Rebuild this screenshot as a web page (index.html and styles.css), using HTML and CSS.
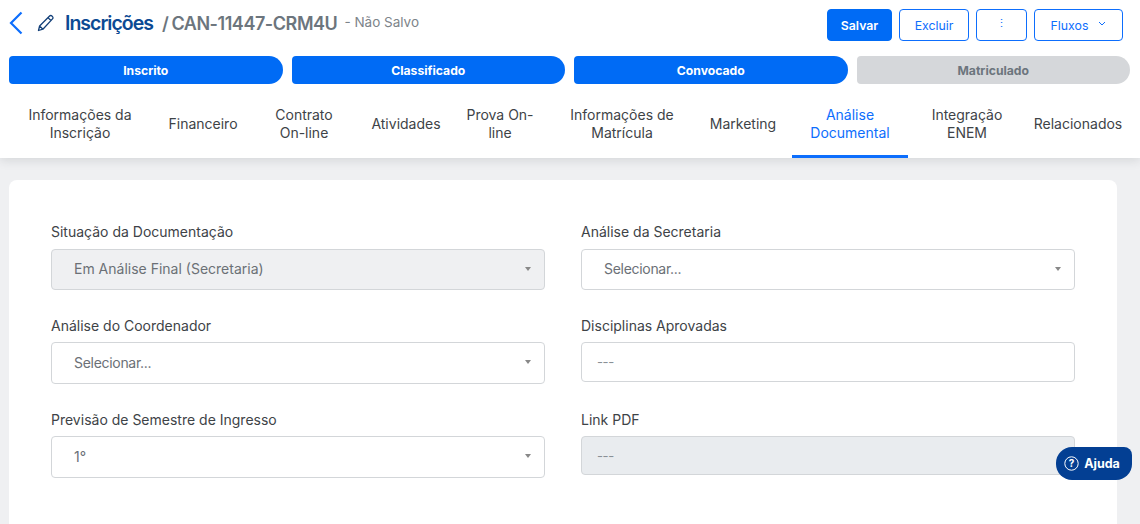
FILE: index.html
```html
<!DOCTYPE html>
<html lang="pt-BR">
<head>
<meta charset="utf-8">
<title>Inscrições</title>
<link rel="stylesheet" href="styles.css">
</head>
<body>
<header class="head">
  <div class="top">
    <div class="crumbs">
      <svg class="back" width="16" height="24" viewBox="0 0 16 24"><path d="M12.5 1.5 2 12 12.5 22.5" fill="none" stroke="#0d6efd" stroke-width="2.2"/></svg>
      <svg class="pen" width="18" height="18" viewBox="0 0 18 18"><path d="M1.5 16.5 2.6 12 12.6 2a1.6 1.6 0 0 1 2.3 0l.6.6a1.6 1.6 0 0 1 0 2.3L5.9 15.2ZM11 3.6l3.4 3.4M2.6 12l3.3 3.2" fill="none" stroke="#123f78" stroke-width="1.3" stroke-linejoin="round"/></svg>
      <h1 class="title">Inscrições</h1>
      <span class="code">/ CAN-11447-CRM4U</span>
      <span class="status">- Não Salvo</span>
    </div>
    <div class="actions">
      <button class="btn solid save">Salvar</button>
      <button class="btn del">Excluir</button>
      <button class="btn more">⋮</button>
      <button class="btn flows">Fluxos <svg class="chev" width="8" height="5" viewBox="0 0 8 5"><path d="M1 1l3 3 3-3" fill="none" stroke="#0d6efd" stroke-width="1"/></svg></button>
    </div>
  </div>
  <div class="steps">
    <div class="step on">Inscrito</div>
    <div class="step on">Classificado</div>
    <div class="step on">Convocado</div>
    <div class="step">Matriculado</div>
  </div>
  <nav class="tabs">
    <a class="tab">Informações da Inscrição</a>
    <a class="tab">Financeiro</a>
    <a class="tab">Contrato<br>On-line</a>
    <a class="tab">Atividades</a>
    <a class="tab nowrap">Prova On-<br>line</a>
    <a class="tab">Informações de Matrícula</a>
    <a class="tab">Marketing</a>
    <a class="tab active">Análise Documental</a>
    <a class="tab">Integração ENEM</a>
    <a class="tab">Relacionados</a>
  </nav>
</header>
<main class="card">
  <div class="form">
    <div class="field"><label>Situação da Documentação</label><div class="box select disabled">Em Análise Final (Secretaria)<i class="caret"></i></div></div>
    <div class="field"><label>Análise da Secretaria</label><div class="box select ph">Selecionar...<i class="caret"></i></div></div>
    <div class="field"><label>Análise do Coordenador</label><div class="box select ph">Selecionar...<i class="caret"></i></div></div>
    <div class="field"><label>Disciplinas Aprovadas</label><div class="box input">---</div></div>
    <div class="field"><label>Previsão de Semestre de Ingresso</label><div class="box select">1°<i class="caret"></i></div></div>
    <div class="field"><label>Link PDF</label><div class="box input readonly">---</div></div>
  </div>
</main>
<button class="help"><svg width="15" height="15" viewBox="0 0 15 15"><circle cx="7.5" cy="7.5" r="6.7" fill="none" stroke="#fff" stroke-width="1"/><text x="7.5" y="11" text-anchor="middle" font-size="10" font-family="Inter, sans-serif" fill="#fff">?</text></svg>Ajuda</button>
</body>
</html>
```
FILE: styles.css
```css
* { box-sizing: border-box; }
html, body { height: 100%; }
body {
  margin: 0;
  height: 524px;
  overflow: hidden;
  background: #eff0f2;
  font-family: Inter, "Noto Sans", sans-serif;
  color: #3e4347;
}
.head {
  background: #fff;
  height: 158px;
  padding: 9px 10px 0 9px;
  box-shadow: 0 2px 10px rgba(40, 50, 60, .14);
}
.top { display: flex; justify-content: space-between; height: 32px; }
.crumbs { display: flex; align-items: center; height: 28px; }
.pen { margin-left: 12px; }
.title { margin: 0 0 0 10px; font-size: 19.5px; font-weight: 600; color: #0b4a94; letter-spacing: -1px; }
.code { margin-left: 9px; font-size: 18px; font-weight: 600; color: #6c757d; letter-spacing: -.45px; word-spacing: -1px; }
.status { margin-left: 7px; font-size: 13.5px; color: #7d848a; margin-top: -2px; }
.actions { display: flex; gap: 7px; margin-right: 7px; }
.btn {
  height: 32px;
  border: 1px solid #0d6efd;
  border-radius: 4px;
  background: #fff;
  color: #0d6efd;
  font: 400 12.3px Inter, sans-serif;
  padding: 0;
}
.solid { background: #006bf5; border-color: #006bf5; color: #fff; font-weight: 600; }
.save { width: 65px; }
.del { width: 70px; }
.more { width: 51px; font-size: 11px; padding-bottom: 4px; }
.flows { width: 89px; display: flex; align-items: center; justify-content: center; gap: 10px; }
.chev { margin-top: -3px; }
.steps { display: grid; grid-template-columns: repeat(4, 1fr); gap: 9px; margin-top: 15px; }
.step {
  height: 28px;
  border-radius: 4px 14px 14px 4px;
  background: #d5d7da;
  color: #6c757d;
  font-size: 12.2px;
  font-weight: 700;
  display: flex;
  align-items: center;
  justify-content: center;
}
.step.on { background: #006bf5; color: #fff; }
.tabs {
  display: grid;
  grid-template-columns: 160px 86px 116px 88px 100px 144px 98px 116px 118px 104px;
  margin: 12px 0 0 -9px;
  height: 62px;
}
.tab {
  display: flex;
  align-items: center;
  justify-content: center;
  text-align: center;
  font-size: 14px;
  line-height: 18px;
  color: #3e4347;
  padding: 0 18px 7px;
}
.tab.nowrap { padding-left: 0; padding-right: 0; }
.tab.active { color: #0d6efd; border-bottom: 3px solid #0d6efd; padding-bottom: 4px; }
.card {
  margin: 22px 23px 0 9px;
  height: 344px;
  padding: 43px 42px 0;
  background: #fff;
  border-radius: 8px 8px 0 0;
}
.form { display: grid; grid-template-columns: 494px 494px; column-gap: 36px; row-gap: 11px; }
.field { height: 83px; }
.field:nth-child(n+3) label { margin-bottom: 7px; }
label { display: block; font-size: 14px; line-height: 18px; color: #3e4347; margin-bottom: 8px; }
.box {
  position: relative;
  display: flex;
  align-items: center;
  border: 1px solid #d3d6d9;
  border-radius: 4px;
  font-size: 14px;
  color: #6b7076;
}
.select { height: 42px; padding: 0 0 2px 22px; }
.field:nth-child(-n+2) .select { height: 41px; }
.ph { letter-spacing: -.3px; }
.input { height: 40px; padding-left: 15px; font-size: 13px; letter-spacing: -.4px; color: #8a9096; }
.field:last-child .input { height: 39px; }
.disabled { background: #eff0f2; }
.readonly { background: #e9ecef; }
.caret {
  position: absolute;
  right: 13px;
  top: 17px;
  border: 3px solid transparent;
  border-top: 4px solid #888;
  border-bottom: 0;
}
.help {
  position: absolute;
  left: 1056px;
  top: 447px;
  width: 76px;
  height: 33px;
  border: 0;
  border-radius: 16px 8px 16px 16px;
  background: #033f93;
  color: #fff;
  font: 700 12.5px Inter, sans-serif;
  display: flex;
  align-items: center;
  justify-content: center;
  gap: 5px;
  padding: 0 4px 0 0;
}
```
